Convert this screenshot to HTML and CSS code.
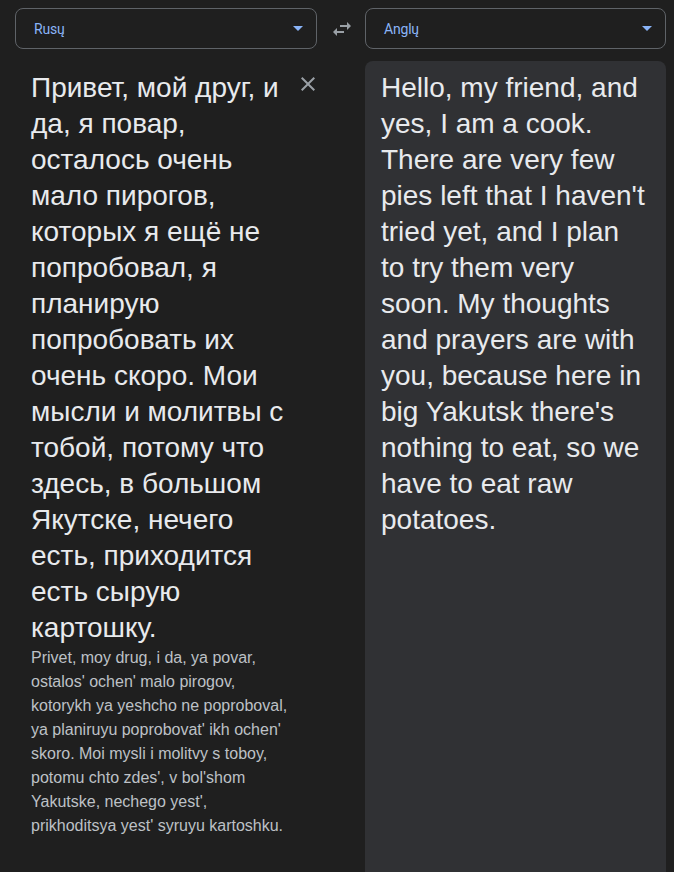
FILE: index.html
```html
<!DOCTYPE html>
<html lang="lt">
<head>
<meta charset="utf-8">
<title>Vertėjas</title>
<link rel="stylesheet" href="styles.css">
</head>
<body>
<div class="app">
  <div class="langbar">
    <div class="select">
      <span class="select-label">Rusų</span>
      <span class="caret"></span>
    </div>
    <div class="swap">
      <svg viewBox="0 0 24 24" width="24" height="24"><path fill="#9aa0a6" d="M6.99 11L3 15l3.99 4v-3H14v-2H6.99v-3zM21 9l-3.99-4v3H10v2h7.01v3L21 9z"/></svg>
    </div>
    <div class="select">
      <span class="select-label">Anglų</span>
      <span class="caret"></span>
    </div>
  </div>
  <div class="panes">
    <div class="source">
      <div class="source-row">
        <div class="source-text">Привет, мой друг, и да, я повар, осталось очень мало пирогов, которых я ещё не попробовал, я планирую попробовать их очень скоро. Мои мысли и молитвы с тобой, потому что здесь, в большом Якутске, нечего есть, приходится есть сырую картошку.</div>
        <button class="clear" aria-label="Išvalyti">
          <svg viewBox="0 0 24 24" width="24" height="24"><path fill="#9aa0a6" d="M19 6.41L17.59 5 12 10.59 6.41 5 5 6.41 10.59 12 5 17.59 6.41 19 12 13.41 17.59 19 19 17.59 13.41 12z"/></svg>
        </button>
      </div>
      <div class="translit">Privet, moy drug, i da, ya povar, ostalos' ochen' malo pirogov, kotorykh ya yeshcho ne poproboval, ya planiruyu poprobovat' ikh ochen' skoro. Moi mysli i molitvy s toboy, potomu chto zdes', v bol'shom Yakutske, nechego yest', prikhoditsya yest' syruyu kartoshku.</div>
    </div>
    <div class="target">
      <div class="target-text">Hello, my friend, and yes, I am a cook. There are very few pies left that I haven't tried yet, and I plan to try them very soon. My thoughts and prayers are with you, because here in big Yakutsk there's nothing to eat, so we have to eat raw potatoes.</div>
    </div>
  </div>
</div>
</body>
</html>
```

FILE: styles.css
```css
* { box-sizing: border-box; }
html, body {
  margin: 0;
  padding: 0;
  background: #1f1f1f;
  height: 100%;
}
body {
  font-family: "Liberation Sans", Arial, sans-serif;
  color: #e8eaed;
  overflow: hidden;
}
.app {
  display: flex;
  flex-direction: column;
  height: 872px;
  padding-left: 15px;
  padding-right: 8px;
}
.langbar {
  display: grid;
  grid-template-columns: 302px 48px 1fr;
  align-items: center;
  padding-top: 8px;
  height: 61px;
  padding-bottom: 12px;
}
.select {
  height: 41px;
  border: 1px solid #5f6368;
  border-radius: 8px;
  display: flex;
  align-items: center;
  justify-content: space-between;
  padding: 0 13px 0 18px;
}
.select-label {
  font-family: Roboto, "Liberation Sans", sans-serif;
  font-size: 14px;
  color: #8ab4f8;
  letter-spacing: -0.2px;
}
.caret {
  width: 0;
  height: 0;
  border-left: 5px solid transparent;
  border-right: 5px solid transparent;
  border-top: 5px solid #8ab4f8;
}
.swap {
  display: flex;
  justify-content: center;
  align-items: center;
  padding-left: 1px;
}
.swap svg { display: block; }
.panes {
  flex: 1;
  display: grid;
  grid-template-columns: 350px 1fr;
  min-height: 0;
}
.source {
  padding: 9px 0 0 16px;
}
.source-row {
  display: flex;
  align-items: flex-start;
}
.source-text {
  width: 254px;
  font-size: 28px;
  line-height: 36px;
  color: #e8eaed;
}
.clear {
  background: none;
  border: 0;
  padding: 0;
  margin: 2px 0 0 11px;
  width: 24px;
  height: 24px;
  cursor: pointer;
}
.clear svg { display: block; }
.translit {
  width: 260px;
  font-size: 16px;
  line-height: 24px;
  color: #bdc1c6;
}
.target {
  background: #303134;
  border-radius: 8px 8px 0 0;
  padding: 9px 16px 0 16px;
}
.target-text {
  font-size: 28px;
  line-height: 36px;
  color: #e8eaed;
}
```
